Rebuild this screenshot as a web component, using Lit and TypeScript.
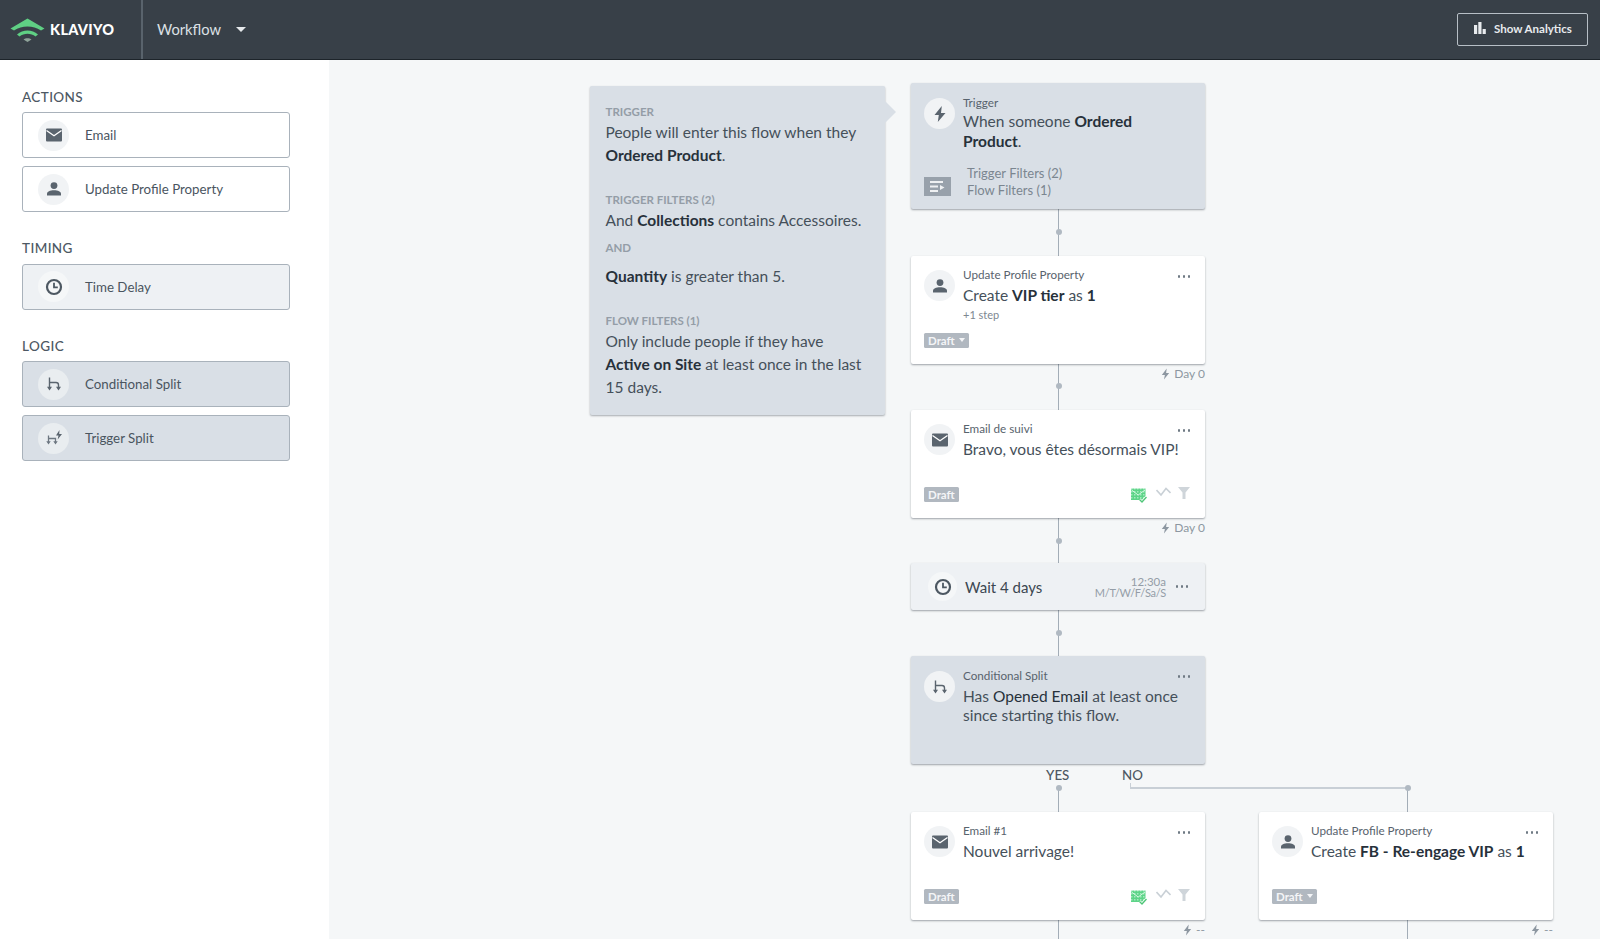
import { LitElement, html, css, svg, nothing } from 'lit';
import { customElement } from 'lit/decorators.js';

const icons: Record<string, any> = {
  mail: svg`<rect x="1" y="2.5" width="16" height="13" rx="1" fill="#5a646e"/><path d="M1.5 4.5 9 9.8l7.5-5.3" fill="none" stroke="#fff" stroke-width="1.3"/>`,
  person: svg`<circle cx="9" cy="5.6" r="3.4" fill="#5a646e"/><path d="M2 15.5v-1.6c0-2.4 3-3.6 7-3.6s7 1.200 7 3.600v1.600z" fill="#5a646e"/>`,
  clock: svg`<circle cx="9" cy="9" r="7" fill="none" stroke="#4d5862" stroke-width="2.200"/><path d="M9 4.800v4.500h3.800" fill="none" stroke="#4d5862" stroke-width="1.800"/>`,
  split: svg`<path d="M4.500 13V7.500M4.500 2.500v5h6.500q2.500 0 2.500 2.500v3" fill="none" stroke="#5a646e" stroke-width="1.400"/><path d="M2 11.800h5L4.500 15.500zM11 11.800h5l-2.500 3.700z" fill="#5a646e"/>`,
  tsplit: svg`<path d="M3.500 13.500V9.500h7v4M3.500 6.500v3" fill="none" stroke="#6d7781" stroke-width="1.300"/><path d="M1.300 12.300h4.400L3.500 15.500zM8.300 12.300h4.400l-2.200 3.200z" fill="#6d7781"/><path d="M14.500 1 11 6.500h2.500l-.8 4L17 5h-2.800z" fill="#5a646e"/>`,
  bolt: svg`<path d="M10.800 1 3.500 10h4.300l-1 7L14.500 8H10z" fill="#5a646e"/>`,
};

const icon = (name: string, size = 18) =>
  html`<svg width=${size} height=${size} viewBox="0 0 18 18">${icons[name]}</svg>`;

const bolt = html`<svg class="bolt" width="11" height="12" viewBox="0 0 18 18"><path d="M11 0 3 10.500h5L6.500 18 15 7.500h-5z" fill="#8d97a1"/></svg>`;

const sections = [
  {
    title: 'ACTIONS',
    items: [
      { label: 'Email', icon: 'mail', kind: 'plain' },
      { label: 'Update Profile Property', icon: 'person', kind: 'plain' },
    ],
  },
  { title: 'TIMING', items: [{ label: 'Time Delay', icon: 'clock', kind: 'pale' }] },
  {
    title: 'LOGIC',
    items: [
      { label: 'Conditional Split', icon: 'split', kind: 'grey' },
      { label: 'Trigger Split', icon: 'tsplit', kind: 'grey' },
    ],
  },
];

// canvas coordinates: page position minus header and sidebar
const wires = [
  { x: 729, y: 149, w: 1, h: 47 },
  { x: 729, y: 304, w: 1, h: 46 },
  { x: 729, y: 458, w: 1, h: 45 },
  { x: 729, y: 550, w: 1, h: 46 },
  { x: 729, y: 728, w: 1, h: 24 },
  { x: 729, y: 860, w: 1, h: 20 },
  { x: 1078, y: 728, w: 1, h: 24 },
  { x: 1078, y: 860, w: 1, h: 20 },
  { x: 801, y: 723, w: 1, h: 6, light: true },
  { x: 801, y: 727, w: 278, h: 1.5, light: true },
];
const joints = [
  [729.5, 172],
  [729.5, 326],
  [729.5, 480.5],
  [729.5, 573],
  [729.5, 728],
  [1078.5, 728],
];

@customElement('app-root')
export class AppRoot extends LitElement {
  static styles = css`
    :host {
      display: block;
      height: 100vh;
      overflow: hidden;
      font-family: Lato, 'Open Sans', sans-serif;
      color: #434e58;
      background: #f5f7f8;
    }
    * { box-sizing: border-box; }
    b { font-weight: 700; color: #27313b; }

    .header {
      height: 60px;
      display: flex;
      align-items: stretch;
      background-color: #384048;
      background-image: radial-gradient(#3f474f 0.6px, transparent 0.7px);
      background-size: 4px 4px;
      border-bottom: 1px solid #1d242a;
      padding-right: 12px;
    }
    .brand {
      width: 143px;
      display: flex;
      align-items: center;
      padding-left: 10px;
      gap: 5px;
      border-right: 2px solid #59636c;
    }
    .wordmark {
      font-size: 14.500px;
      font-weight: 900;
      letter-spacing: 0.3px;
      color: #fff;
    }
    .crumb {
      display: flex;
      align-items: center;
      padding-left: 14px;
      font-size: 14.700px;
      color: #dde1e5;
      flex: 1;
      padding-bottom: 1px;
    }
    .caret {
      margin-left: 15px;
      border-left: 5px solid transparent;
      border-right: 5px solid transparent;
      border-top: 5px solid #e6e9ec;
    }
    .analytics {
      align-self: center;
      width: 131px;
      height: 33px;
      margin-top: -1px;
      display: flex;
      align-items: center;
      gap: 8px;
      padding: 0 0 2px 16px;
      border: 1.5px solid #b7bfc6;
      border-radius: 2px;
      font-size: 11.500px;
      font-weight: 700;
      color: #e8ebee;
    }

    .main {
      display: flex;
      height: 879px;
    }
    .sidebar {
      width: 329px;
      flex: none;
      background: #fff;
      padding: 29.500px 0 0 22px;
    }
    .section { margin-bottom: 29px; }
    .section h3 {
      margin: 0 0 7.500px;
      font-size: 13.500px;
      line-height: 15px;
      font-weight: 500;
      letter-spacing: 0.4px;
      color: #4d5863;
    }
    .item {
      width: 268px;
      height: 46px;
      margin-bottom: 8px;
      display: flex;
      align-items: center;
      gap: 16px;
      padding-left: 15px;
      border: 1px solid #a9b2bb;
      border-radius: 3px;
      font-size: 13.300px;
      color: #4a555f;
    }
    .item.pale, .node.pale {
      background-color: #eef1f4;
      background-image: radial-gradient(#f1f3f6 0.6px, transparent 0.7px);
      background-size: 4px 4px;
    }
    .item.grey, .node.grey, .info {
      background-color: #d9dfe6;
      background-image: radial-gradient(#dbe1e7 0.6px, transparent 0.7px);
      background-size: 4px 4px;
    }
    .circle {
      width: 31px;
      height: 31px;
      flex: none;
      border-radius: 50%;
      background: #f1f3f5;
      display: flex;
      align-items: center;
      justify-content: center;
    }
    .item.grey .circle { background: #e9edf0; }
    .item.pale .circle { background: #f5f7f8; }

    .canvas {
      position: relative;
      flex: 1;
      overflow: hidden;
      background: #f5f7f8;
    }
    .wire { position: absolute; background: #a3adb7; }
    .wire.light { background: #c8cfd6; }
    .joint {
      position: absolute;
      width: 6px;
      height: 6px;
      margin: -3px 0 0 -3px;
      border-radius: 50%;
      background: #b0b9c2;
    }
    .branch {
      position: absolute;
      font-size: 13.300px;
      line-height: 16px;
      font-weight: 500;
      color: #4d5863;
    }

    .info {
      position: absolute;
      left: 260.500px;
      top: 26px;
      width: 295.500px;
      height: 329px;
      padding: 19px 15px 0 16px;
      border-radius: 2px;
      box-shadow: 0 1px 2px rgba(50, 60, 70, 0.4);
      font-size: 15.500px;
      line-height: 23px;
      color: #45505a;
    }
    .info::after {
      content: '';
      position: absolute;
      left: 100%;
      top: 15px;
      border-left: 11px solid #d9dfe6;
      border-top: 11px solid transparent;
      border-bottom: 11px solid transparent;
    }
    .info h4 {
      margin: 0 0 2px;
      font-size: 11.500px;
      line-height: 14px;
      font-weight: 700;
      color: #949da7;
    }
    .info p { margin: 0 0 26px; }
    .info p.tight { margin-bottom: 9px; }
    .info h4.and { margin-bottom: 10px; }

    .node {
      position: absolute;
      width: 294px;
      display: flex;
      flex-direction: column;
      padding: 14px 13px 16.500px;
      background: #fff;
      border-radius: 2px;
      box-shadow: 0 1px 2px rgba(50, 60, 70, 0.45);
    }
    .node.grey { padding-top: 15px; }
    .node.trigger { padding-bottom: 11px; }
    .node.trigger .title { margin-top: 4px; }
    .row { display: flex; gap: 8px; }
    .copy { min-width: 0; flex: 1; padding-right: 10px; margin-top: -2px; }
    .kicker {
      font-size: 11.700px;
      line-height: 12px;
      color: #58636d;
    }
    .title {
      margin-top: 5.500px;
      font-size: 15.500px;
      line-height: 19.500px;
      color: #45505a;
    }
    .title .em { color: #27313b; }
    .sub {
      margin-top: 3px;
      font-size: 11px;
      line-height: 14px;
      color: #7d8791;
    }
    .dots {
      position: absolute;
      right: 15px;
      top: 19px;
      display: flex;
      gap: 2.500px;
    }
    .dots i {
      width: 2.500px;
      height: 2.500px;
      border-radius: 50%;
      background: #6f7a84;
    }
    .foot {
      margin-top: auto;
      display: flex;
      align-items: center;
      justify-content: space-between;
    }
    .draft {
      display: flex;
      align-items: center;
      gap: 4px;
      height: 15px;
      padding: 0 4px;
      border-radius: 1.500px;
      background: #b1b8c0;
      color: #f4f5f7;
      font-size: 11.500px;
      font-weight: 700;
    }
    .draft .mini {
      border-left: 3.500px solid transparent;
      border-right: 3.500px solid transparent;
      border-top: 4px solid #f4f5f7;
    }
    .stats { display: flex; align-items: flex-start; gap: 7px; padding-right: 2px; height: 15px; }
    .stats .env { margin-top: 1px; margin-right: 2px; }
    .after {
      position: absolute;
      right: 0;
      top: 100%;
      margin-top: 3px;
      display: flex;
      align-items: center;
      gap: 3px;
      font-size: 12px;
      line-height: 14px;
      color: #8d97a1;
    }
    .filters {
      display: flex;
      align-items: flex-end;
      gap: 16px;
      margin-top: auto;
      font-size: 13px;
      line-height: 16.500px;
      color: #7b8690;
    }
    .filter-icon {
      width: 27px;
      height: 19px;
      margin-bottom: 2px;
      background: #98a1ab;
      display: flex;
      align-items: center;
      justify-content: center;
    }
    .wait {
      flex-direction: row;
      align-items: center;
      padding: 0 0 0 17px;
    }
    .wait .circle { width: 29px; height: 29px; background: #f5f7f8; margin-right: 8px; }
    .wait-title { font-size: 15px; color: #3c4751; flex: 1; }
    .when {
      margin-right: 39px;
      text-align: right;
      font-size: 11.500px;
      line-height: 11px;
      color: #949da7;
    }
    .when .days { font-size: 11px; letter-spacing: -0.3px; }
    .wait .dots { top: 22px; right: 17px; }
  `;

  private draft(caret = false) {
    return html`<span class="draft">Draft${caret ? html`<span class="mini"></span>` : nothing}</span>`;
  }

  private stats() {
    return html`<div class="stats">
      <svg class="env" width="16" height="16" viewBox="0 0 16 16">
        <defs>
          <pattern id="dither" width="3" height="3" patternUnits="userSpaceOnUse">
            <rect width="3" height="3" fill="#5dd488"/>
            <rect width="1.500" height="1.500" fill="#a2ebbd"/>
          </pattern>
        </defs>
        <rect x="0" y="0.500" width="14.500" height="11.500" fill="url(#dither)"/>
        <path d="M.5 2 7.200 7 14 2" fill="none" stroke="#d9f7e4" stroke-width="1"/>
        <path d="M8.500 11.500l2.500 2.500 4.500-5" fill="none" stroke="#fff" stroke-width="3"/>
        <path d="M8.500 11.500l2.500 2.500 4.500-5" fill="none" stroke="#4fc678" stroke-width="1.400"/>
      </svg>
      <svg width="15" height="10" viewBox="0 0 15 10"><path d="M.5 3 5 8 10 1.500 14.500 6" fill="none" stroke="#c9d0d6" stroke-width="1.600"/></svg>
      <svg width="12" height="12" viewBox="0 0 12 12"><path d="M0 0h12L7.500 5.500V12h-3V5.500z" fill="#cfd5da"/></svg>
    </div>`;
  }

  private moreDots() {
    return html`<div class="dots"><i></i><i></i><i></i></div>`;
  }

  private head(iconName: string, kicker: string, title: unknown, sub?: string) {
    return html`<div class="row">
      <div class="circle">${icon(iconName)}</div>
      <div class="copy">
        <div class="kicker">${kicker}</div>
        <div class="title">${title}</div>
        ${sub ? html`<div class="sub">${sub}</div>` : nothing}
      </div>
    </div>`;
  }

  render() {
    return html`
      <div class="header">
        <div class="brand">
          <svg width="35" height="24" viewBox="0 0 35 24">
            <path d="M0.500 10.500 17.500 0.500l17 10-3.500 2c-8-5.500-19-5.500-27 0z" fill="#5fd084"/>
            <path d="M7 16.500c6-5.500 15-5.500 21 0l-2.500 2c-4.500-3.800-11.500-3.800-16 0z" fill="#5fd084"/>
            <path d="M13.500 21.500c2-1.700 6-1.700 8 0l-4 2.500z" fill="#8fa39a"/>
          </svg>
          <span class="wordmark">KLAVIYO</span>
        </div>
        <div class="crumb">Workflow<span class="caret"></span></div>
        <div class="analytics">
          <svg width="12" height="12" viewBox="0 0 12 12">
            <rect x="0" y="3" width="3.200" height="9" fill="#e8ebee"/>
            <rect x="4.300" y="0" width="3.200" height="12" fill="#e8ebee"/>
            <rect x="8.600" y="7" width="3.200" height="5" fill="#e8ebee"/>
          </svg>
          Show Analytics
        </div>
      </div>
      <div class="main">
        <aside class="sidebar">
          ${sections.map(
            (s) => html`<div class="section">
              <h3>${s.title}</h3>
              ${s.items.map(
                (it) => html`<div class="item ${it.kind}">
                  <div class="circle">${icon(it.icon)}</div>
                  ${it.label}
                </div>`
              )}
            </div>`
          )}
        </aside>
        <div class="canvas">
          ${wires.map(
            (w) => html`<div
              class="wire ${w.light ? 'light' : ''}"
              style="left:${w.x}px;top:${w.y}px;width:${w.w}px;height:${w.h}px"
            ></div>`
          )}
          ${joints.map(([x, y]) => html`<div class="joint" style="left:${x}px;top:${y}px"></div>`)}
          <div class="branch" style="left:717px;top:707px">YES</div>
          <div class="branch" style="left:793px;top:707px">NO</div>

          <div class="info">
            <h4>TRIGGER</h4>
            <p>People will enter this flow when they <b>Ordered Product</b>.</p>
            <h4>TRIGGER FILTERS (2)</h4>
            <p class="tight">And <b>Collections</b> contains Accessoires.</p>
            <h4 class="and">AND</h4>
            <p><b>Quantity</b> is greater than 5.</p>
            <h4>FLOW FILTERS (1)</h4>
            <p>Only include people if they have <b>Active on Site</b> at least once in the last 15 days.</p>
          </div>

          <div class="node grey trigger" style="left:582px;top:23px;height:126px">
            ${this.head('bolt', 'Trigger', html`When someone <b>Ordered Product</b>.`)}
            <div class="filters">
              <div class="filter-icon">
                <svg width="15" height="11" viewBox="0 0 15 11">
                  <path d="M0 0h13v2H0zM0 4.500h8v2H0zM0 9h8v2H0z" fill="#eef0f2"/>
                  <path d="M10 4l4.500 2.500L10 9z" fill="#eef0f2"/>
                </svg>
              </div>
              <div>Trigger Filters (2)<br />Flow Filters (1)</div>
            </div>
          </div>

          <div class="node" style="left:582px;top:196px;height:108px">
            ${this.head('person', 'Update Profile Property', html`Create <b>VIP tier</b> as <b>1</b>`, '+1 step')}
            ${this.moreDots()}
            <div class="foot">${this.draft(true)}</div>
            <div class="after">${bolt} Day 0</div>
          </div>

          <div class="node" style="left:582px;top:350px;height:108px">
            ${this.head('mail', 'Email de suivi', 'Bravo, vous êtes désormais VIP!')}
            ${this.moreDots()}
            <div class="foot">${this.draft()}${this.stats()}</div>
            <div class="after">${bolt} Day 0</div>
          </div>

          <div class="node pale wait" style="left:582px;top:503px;height:47px">
            <div class="circle">${icon('clock')}</div>
            <div class="wait-title">Wait 4 days</div>
            <div class="when">12:30a<br /><span class="days">M/T/W/F/Sa/S</span></div>
            ${this.moreDots()}
          </div>

          <div class="node grey" style="left:582px;top:596px;height:108px">
            ${this.head('split', 'Conditional Split', html`Has <span class="em">Opened Email</span> at least once since starting this flow.`)}
            ${this.moreDots()}
          </div>

          <div class="node" style="left:582px;top:752px;height:108px">
            ${this.head('mail', 'Email #1', 'Nouvel arrivage!')}
            ${this.moreDots()}
            <div class="foot">${this.draft()}${this.stats()}</div>
            <div class="after">${bolt} --</div>
          </div>

          <div class="node" style="left:930px;top:752px;height:108px">
            ${this.head('person', 'Update Profile Property', html`Create <b>FB - Re-engage VIP</b> as <b>1</b>`)}
            ${this.moreDots()}
            <div class="foot">${this.draft(true)}</div>
            <div class="after">${bolt} --</div>
          </div>
        </div>
      </div>
    `;
  }
}
